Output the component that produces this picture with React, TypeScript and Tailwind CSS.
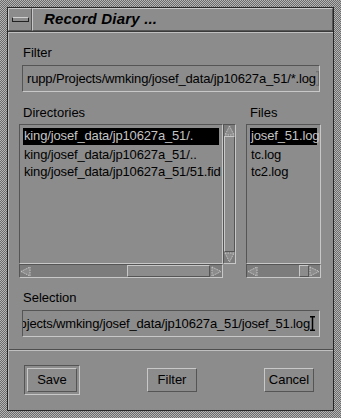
import React from 'react';

const raised = 'border border-t-[#c8c8c8] border-l-[#c8c8c8] border-b-[#555555] border-r-[#555555]';
const sunken = 'border border-t-[#555555] border-l-[#555555] border-b-[#c8c8c8] border-r-[#c8c8c8]';

const Arrow = ({ dir }: { dir: 'up' | 'down' | 'left' | 'right' }) => {
  const pts: Record<string, string> = {
    up: '5.5,1 10,10 1,10',
    down: '1,1 10,1 5.5,10',
    left: '1,5.5 10,1 10,10',
    right: '1,1 10,5.5 1,10',
  };
  return (
    <svg width="11" height="11" viewBox="0 0 11 11" className="block shrink-0">
      <polygon points={pts[dir]} fill="#8c8c8c" stroke="#c8c8c8" strokeWidth="1" strokeDasharray="1.5 1" />
    </svg>
  );
};

const Cursor = ({ faint }: { faint?: boolean }) => (
  <svg width="5" height="15" viewBox="0 0 5 15" className="block shrink-0">
    <g stroke={faint ? '#6a6a6a' : '#000'} strokeWidth={faint ? 1 : 1.5}>
      <line x1="0" y1="0.75" x2="5" y2="0.75" />
      <line x1="0" y1="14.25" x2="5" y2="14.25" />
      <line x1="2.5" y1="0" x2="2.5" y2="15" />
    </g>
  </svg>
);

const TextField = ({ value, end, faint }: { value: string; end?: boolean; faint?: boolean }) => (
  <div className={`${sunken} h-[27px] mx-[13px] flex items-center px-[4px] overflow-hidden ${end ? 'justify-end' : ''}`}>
    <span className="whitespace-nowrap tracking-[-0.15px]">{value}</span>
    <Cursor faint={faint} />
  </div>
);

const HScroll = ({ thumbLeft, thumbWidth }: { thumbLeft: number; thumbWidth: number }) => (
  <div className={`${sunken} h-[14px] flex items-center bg-[#7c7c7c]`}>
    <Arrow dir="left" />
    <div className="flex-1 h-full relative">
      <div
        className={`${raised} absolute top-0 bottom-0 bg-[#8c8c8c]`}
        style={{ left: thumbLeft, width: thumbWidth }}
      />
    </div>
    <Arrow dir="right" />
  </div>
);

const ListItem = ({ text, selected }: { text: string; selected?: boolean }) => (
  <div
    className={`h-[17px] leading-[15px] px-[1px] whitespace-nowrap tracking-[-0.15px] ${
      selected ? 'bg-black text-[#c4c4c4] h-[15px] mb-[2px]' : ''
    }`}
  >
    {text}
  </div>
);

const Button = ({ label }: { label: string }) => (
  <div className={`${raised} w-[50px] h-[24px] flex items-center justify-center`}>{label}</div>
);

export default function App() {
  return (
    <div className="w-[341px] h-[418px] p-[7px] bg-[image:repeating-conic-gradient(#6c6c6c_0_25%,#b4b4b4_0_50%)] bg-[length:2px_2px] font-['Liberation_Sans',Arial,sans-serif] text-[13px] text-black">
      <div className="w-full h-full border border-[#262626] flex flex-col bg-[#8c8c8c]">
        {/* title bar */}
        <div className="h-[24px] flex border-b border-b-[#3a3a3a]">
          <div className={`${raised} w-[24px] h-full flex items-center justify-center`}>
            <div className="w-[17px] h-[5px] border border-[#222] border-t-[#d0d0d0] bg-[#8c8c8c]" />
          </div>
          <div className={`${raised} flex-1 h-full flex items-center pl-[11px]`}>
            <span className="italic font-bold text-[15px] tracking-[0.2px]">Record Diary ...</span>
          </div>
        </div>

        {/* content */}
        <div className="flex-1 flex flex-col border-t border-t-[#c0c0c0] border-l border-l-[#b8b8b8]">
          <div className="mt-[12px] ml-[14px] h-[16px] leading-[16px]">Filter</div>
          <div className="mt-[4px]">
            <TextField value="rupp/Projects/wmking/josef_data/jp10627a_51/*.log" faint />
          </div>

          <div className="mt-[13px] flex h-[16px] leading-[16px]">
            <div className="ml-[14px] w-[227px]">Directories</div>
            <div>Files</div>
          </div>

          <div className="mt-[3px] flex ml-[10px]">
            <div className="w-[217px] h-[154px] grid grid-cols-[204px_13px] grid-rows-[140px_14px]">
              <div className={`${sunken} px-[3px] pt-[3px] overflow-hidden`}>
                <ListItem text="king/josef_data/jp10627a_51/." selected />
                <ListItem text="king/josef_data/jp10627a_51/.." />
                <ListItem text="king/josef_data/jp10627a_51/51.fid" />
              </div>
              <div className={`${sunken} flex flex-col items-center bg-[#7c7c7c]`}>
                <Arrow dir="up" />
                <div className={`${raised} w-full flex-1 bg-[#8c8c8c]`} />
                <Arrow dir="down" />
              </div>
              <HScroll thumbLeft={96} thumbWidth={83} />
              <div />
            </div>

            <div className="ml-[10px] w-[75px] h-[154px] flex flex-col">
              <div className={`${sunken} h-[140px] px-[3px] pt-[3px] overflow-hidden`}>
                <ListItem text="josef_51.log" selected />
                <ListItem text="tc.log" />
                <ListItem text="tc2.log" />
              </div>
              <HScroll thumbLeft={41} thumbWidth={10} />
            </div>
          </div>

          <div className="mt-[12px] ml-[14px] h-[16px] leading-[16px]">Selection</div>
          <div className="mt-[4px]">
            <TextField value="/usr/people/rupp/Projects/wmking/josef_data/jp10627a_51/josef_51.log" end />
          </div>

          <div className="mt-[12px] h-[2px] border-t border-t-[#4e4e4e] border-b border-b-[#c0c0c0]" />

          <div className="mt-[14px] flex items-center justify-between pl-[15px] pr-[19px]">
            <div className={`${sunken} p-[2px]`}>
              <Button label="Save" />
            </div>
            <Button label="Filter" />
            <Button label="Cancel" />
          </div>
        </div>
      </div>
    </div>
  );
}
